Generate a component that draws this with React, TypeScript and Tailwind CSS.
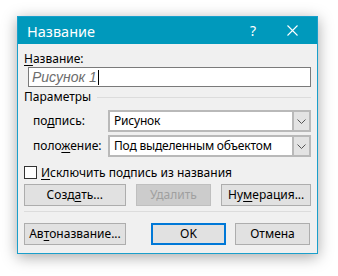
import React from 'react'

const font = { fontFamily: '"Noto Sans", "Open Sans", sans-serif' }

type btnprops = {
    className?: string,
    children: React.ReactNode,
    disabled?: boolean,
    primary?: boolean
}

const Btn = ({ className, children, disabled, primary }: btnprops) => {
    if (disabled) {
        return <div className={`h-[22px] flex items-center justify-center border border-[#bfbfbf] bg-[#cccccc] text-[#a0a0a0] ${className}`}>{children}</div>
    }
    if (primary) {
        return <div className={`h-[22px] flex items-center justify-center border-2 border-[#0078d7] bg-[#e1e1e1] text-black ${className}`}>{children}</div>
    }
    return <div className={`h-[22px] flex items-center justify-center border border-[#adadad] bg-[#e1e1e1] text-black ${className}`}>{children}</div>
}

const Combo = ({ value }: { value: string }) => (
    <div className="w-[203px] h-[22px] flex border-2 border-[#b9b9b9] bg-white">
        <div className="flex-1 flex items-center pl-[4px] text-black tracking-[-0.2px]">{value}</div>
        <div className="w-[17px] flex items-center justify-center bg-[#e3e3e3] border-l-2 border-[#b9b9b9]">
            <svg width="9" height="5" viewBox="0 0 9 5">
                <path d="M0.5 0.5 L4.5 4.5 L8.5 0.5" fill="none" stroke="#555" strokeWidth="1" />
            </svg>
        </div>
    </div>
)

const U = ({ children }: { children: React.ReactNode }) => <span className="underline underline-offset-2">{children}</span>

export default function App() {
    return (
        <div className="w-[338px] h-[276px] bg-white pt-[16px] pl-[17px]" style={font}>
            <div className="w-[301px] h-[238px] border border-[#1a9fcb] bg-[#f0f0f0] shadow-[0_3px_14px_rgba(0,0,0,0.35)] flex flex-col text-[12px] leading-[16px]">
                <div className="h-[27px] bg-[#0099bc] flex items-center text-white pl-[9px]">
                    <span className="text-[14.5px] flex-1">Название</span>
                    <span className="text-[14px] w-[37px]">?</span>
                    <div className="w-[30px] flex items-center">
                        <svg width="11" height="11" viewBox="0 0 11 11">
                            <path d="M0.5 0.5 L10.5 10.5 M10.5 0.5 L0.5 10.5" stroke="white" strokeWidth="1.1" />
                        </svg>
                    </div>
                </div>
                <div className="flex flex-col px-[6px]">
                    <div className="mt-[7px] h-[16px] text-black"><U>Н</U>азвание:</div>
                    <div className="ml-[4px] h-[20px] border border-[#7a7a7a] bg-white flex items-center pl-[3px]">
                        <span className="italic text-[#6d6d6d] text-[14px]" style={{ fontFamily: '"Liberation Sans", Arial, sans-serif' }}>Рисунок 1</span>
                        <span className="w-px h-[15px] bg-black ml-[1px]" />
                    </div>
                    <div className="mt-[2px] h-[16px] flex items-center">
                        <span className="text-black">Параметры</span>
                        <span className="flex-1 h-px bg-[#dcdcdc] ml-[6px]" />
                    </div>
                    <div className="mt-[5px] flex items-center">
                        <span className="flex-1 pl-[9px] text-black">по<U>д</U>пись:</span>
                        <Combo value="Рисунок" />
                    </div>
                    <div className="mt-[3px] flex items-center">
                        <span className="flex-1 pl-[9px] text-black">поло<U>ж</U>ение:</span>
                        <Combo value="Под выделенным объектом" />
                    </div>
                    <div className="mt-[9px] h-[13px] flex items-center">
                        <span className="w-[13px] h-[13px] border border-[#333] bg-white" />
                        <span className="ml-[4px] text-black"><U>И</U>сключить подпись из названия</span>
                    </div>
                    <div className="mt-[5px] flex gap-[10px]">
                        <Btn className="w-[102px]">Созд<U>а</U>ть...</Btn>
                        <Btn className="w-[76px]" disabled>Удалить</Btn>
                        <Btn className="w-[90px]">Ну<U>м</U>ерация...</Btn>
                    </div>
                    <div className="mt-[5px] h-px bg-[#dcdcdc]" />
                    <div className="mt-[11px] flex">
                        <Btn className="w-[102px]">Ав<U>т</U>оназвание...</Btn>
                        <Btn className="w-[75px] ml-[25px]" primary>OK</Btn>
                        <Btn className="w-[75px] ml-[9px]">Отмена</Btn>
                    </div>
                </div>
            </div>
        </div>
    )
}
